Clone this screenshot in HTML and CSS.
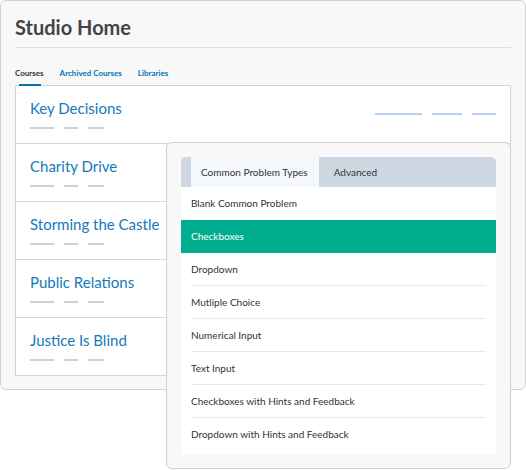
FILE: index.html
```html
<!DOCTYPE html>
<html>
<head>
<meta charset="utf-8">
<link rel="stylesheet" href="styles.css">
</head>
<body>
<div class="stage">
  <div class="studio">
    <h1 class="title">Studio Home</h1>
    <nav class="tabs">
      <a class="tab active">Courses</a>
      <a class="tab">Archived Courses</a>
      <a class="tab">Libraries</a>
    </nav>
    <ul class="courses">
      <li class="course">
        <div class="course-main">
          <span class="course-name">Key Decisions</span>
          <div class="dashes"><i class="d1"></i><i class="d2"></i><i class="d3"></i></div>
        </div>
        <div class="meta"><i class="m1"></i><i class="m2"></i><i class="m3"></i></div>
      </li>
      <li class="course">
        <div class="course-main">
          <span class="course-name">Charity Drive</span>
          <div class="dashes"><i class="d1"></i><i class="d2"></i><i class="d3"></i></div>
        </div>
      </li>
      <li class="course">
        <div class="course-main">
          <span class="course-name">Storming the Castle</span>
          <div class="dashes"><i class="d1"></i><i class="d2"></i><i class="d3"></i></div>
        </div>
      </li>
      <li class="course">
        <div class="course-main">
          <span class="course-name">Public Relations</span>
          <div class="dashes"><i class="d1"></i><i class="d2"></i><i class="d3"></i></div>
        </div>
      </li>
      <li class="course">
        <div class="course-main">
          <span class="course-name">Justice Is Blind</span>
          <div class="dashes"><i class="d1"></i><i class="d2"></i><i class="d3"></i></div>
        </div>
      </li>
    </ul>
  </div>

  <div class="picker">
    <div class="picker-tabs">
      <span class="ptab active">Common Problem Types</span>
      <span class="ptab">Advanced</span>
    </div>
    <ul class="options">
      <li class="opt plain"><span class="opt-label">Blank Common Problem</span></li>
      <li class="opt selected"><span class="opt-label">Checkboxes</span></li>
      <li class="opt"><span class="opt-label">Dropdown</span></li>
      <li class="opt"><span class="opt-label">Mutliple Choice</span></li>
      <li class="opt"><span class="opt-label">Numerical Input</span></li>
      <li class="opt"><span class="opt-label">Text Input</span></li>
      <li class="opt"><span class="opt-label">Checkboxes with Hints and Feedback</span></li>
      <li class="opt last"><span class="opt-label">Dropdown with Hints and Feedback</span></li>
    </ul>
  </div>
</div>
</body>
</html>
```
FILE: styles.css
```css
html, body {
  margin: 0;
  padding: 0;
  background: #ffffff;
}

body {
  font-family: Lato, "Open Sans", "Liberation Sans", sans-serif;
}

.stage {
  display: grid;
  grid-template-columns: 526px;
  grid-template-rows: auto;
  align-items: start;
  justify-items: start;
}

.studio,
.picker {
  grid-column: 1;
  grid-row: 1;
}

.studio {
  box-sizing: border-box;
  width: 526px;
  height: 390px;
  padding: 14px;
  background: #f8f8f8;
  border: 1px solid #d2d2d2;
  border-radius: 6px;
}

.title {
  margin: 0;
  padding: 0 0 8px 0;
  font-size: 20px;
  line-height: 24px;
  font-weight: 700;
  color: #444444;
  border-bottom: 1px solid #e0e0e0;
}

.tabs {
  position: relative;
  z-index: 1;
  display: flex;
  gap: 16px;
  margin-top: 20px;
  margin-bottom: -1px;
}

.tab {
  position: relative;
  display: block;
  padding-bottom: 8px;
  font-size: 8px;
  line-height: 10px;
  font-weight: 700;
  color: #0075b4;
}

.tab.active {
  color: #333333;
}

.tab.active::after {
  content: "";
  position: absolute;
  left: 4px;
  right: 3px;
  bottom: 0;
  height: 2px;
  background: #0075b4;
}

.courses {
  list-style: none;
  margin: 0;
  padding: 0;
  background: #ffffff;
  border: 1px solid #d4d4d4;
}

.course {
  box-sizing: border-box;
  height: 58px;
  padding: 13px 14px 0 14px;
  border-bottom: 1px solid #d8d8d8;
  display: flex;
  justify-content: space-between;
  align-items: flex-start;
}

.course:last-child {
  height: 57px;
  border-bottom: none;
}

.course-name {
  display: block;
  font-size: 15px;
  line-height: 18px;
  color: #1479bd;
}

.dashes {
  display: flex;
  gap: 10px;
  margin-top: 10px;
}

.dashes i {
  display: block;
  height: 2px;
  background: #d0d0d0;
}

.dashes .d1 { width: 24px; }
.dashes .d2 { width: 14px; }
.dashes .d3 { width: 16px; }

.meta {
  display: flex;
  gap: 10px;
  margin-top: 14px;
}

.meta i {
  display: block;
  height: 2px;
  background: #b6cff4;
}

.meta .m1 { width: 47px; }
.meta .m2 { width: 30px; }
.meta .m3 { width: 24px; }

.picker {
  margin: 142px 0 0 166px;
  box-sizing: border-box;
  width: 345px;
  height: 327px;
  padding: 14px 14px 13px 14px;
  background: #f8f8f8;
  border: 1px solid #cfcfcf;
  border-radius: 6px;
}

.picker-tabs {
  display: flex;
  height: 30px;
  padding-left: 10px;
  background: #cdd7e2;
  border-radius: 5px 5px 0 0;
}

.ptab {
  display: block;
  padding: 0 15px;
  font-size: 10px;
  line-height: 30px;
  color: #333333;
}

.ptab.active {
  padding: 0 11px 0 10px;
  background: #f5f8fd;
}

.options {
  list-style: none;
  margin: 0;
  padding: 0 0 5px 0;
  background: #ffffff;
}

.opt {
  padding: 0 10px;
}

.opt-label {
  display: block;
  box-sizing: border-box;
  height: 33px;
  line-height: 32px;
  font-size: 10px;
  color: #333333;
  border-bottom: 1px solid #e3e9f2;
}

.opt.plain .opt-label {
  border-bottom-color: transparent;
}

.opt.selected {
  background: #00ae8f;
}

.opt.selected .opt-label {
  color: #ffffff;
  border-bottom-color: transparent;
}

.opt.last .opt-label {
  height: 32px;
  border-bottom: none;
}
```
